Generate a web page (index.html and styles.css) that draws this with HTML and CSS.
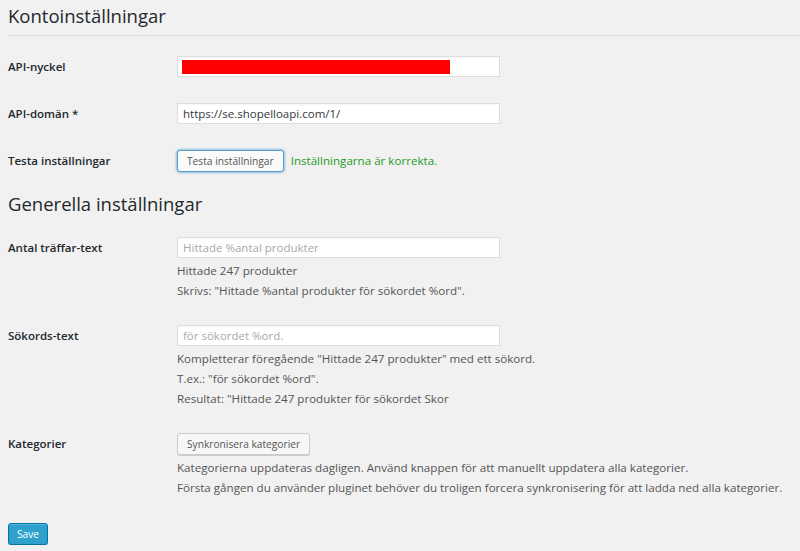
FILE: index.html
```html
<!DOCTYPE html>
<html lang="sv">
<head>
<meta charset="utf-8">
<title>Kontoinställningar</title>
<link rel="stylesheet" href="styles.css">
</head>
<body>
<div class="wrap">
  <h1 class="page-title">Kontoinställningar</h1>

  <div class="form-table">
    <div class="row">
      <div class="label">API-nyckel</div>
      <div class="field">
        <span class="redact-wrap">
          <input class="text-input" type="text" value="">
          <span class="redact"></span>
        </span>
      </div>
    </div>
    <div class="row">
      <div class="label">API-domän *</div>
      <div class="field">
        <input class="text-input" type="text" value="https://se.shopelloapi.com/1/">
      </div>
    </div>
    <div class="row">
      <div class="label">Testa inställningar</div>
      <div class="field inline">
        <button class="button focused" type="button">Testa inställningar</button>
        <span class="success">Inställningarna är korrekta.</span>
      </div>
    </div>
  </div>

  <h2 class="section-title">Generella inställningar</h2>

  <div class="form-table">
    <div class="row has-desc">
      <div class="label">Antal träffar-text</div>
      <div class="field">
        <input class="text-input" type="text" placeholder="Hittade %antal produkter">
        <div class="description">
          <div>Hittade 247 produkter</div>
          <div>Skrivs: "Hittade %antal produkter för sökordet %ord".</div>
        </div>
      </div>
    </div>
    <div class="row has-desc">
      <div class="label">Sökords-text</div>
      <div class="field">
        <input class="text-input" type="text" placeholder="för sökordet %ord.">
        <div class="description">
          <div>Kompletterar föregående "Hittade 247 produkter" med ett sökord.</div>
          <div>T.ex.: "för sökordet %ord".</div>
          <div>Resultat: "Hittade 247 produkter för sökordet Skor</div>
        </div>
      </div>
    </div>
    <div class="row has-desc">
      <div class="label">Kategorier</div>
      <div class="field">
        <button class="button" type="button">Synkronisera kategorier</button>
        <div class="description">
          <div>Kategorierna uppdateras dagligen. Använd knappen för att manuellt uppdatera alla kategorier.</div>
          <div>Första gången du använder pluginet behöver du troligen forcera synkronisering för att ladda ned alla kategorier.</div>
        </div>
      </div>
    </div>
  </div>

  <div class="submit">
    <button class="button-primary" type="button">Save</button>
  </div>
</div>
</body>
</html>
```

FILE: styles.css
```css
* { box-sizing: border-box; }

html, body {
  margin: 0;
  padding: 0;
  background: #f1f1f1;
}

body {
  font-family: "Open Sans", "Noto Sans", sans-serif;
  font-size: 11.6px;
  color: #444;
  overflow: hidden;
}

.wrap {
  margin-left: 8px;
}

.page-title {
  margin: 0;
  font-size: 18.5px;
  font-weight: 400;
  line-height: 29px;
  color: #23282d;
  padding: 1px 0 5px 0;
  border-bottom: 1px solid #dedede;
}

.form-table {
  margin-top: 7px;
}

.section-title {
  margin: 4px 0 6px 0;
  padding-top: 1px;
  font-size: 18.5px;
  font-weight: 400;
  line-height: 28px;
  color: #23282d;
}

.section-title + .form-table {
  margin-top: 0;
}

.row {
  display: grid;
  grid-template-columns: 169px 1fr;
  padding: 13px 0 13px 0;
}

.row.has-desc {
  padding-bottom: 11px;
}

.label {
  padding-top: 1px;
  font-weight: 600;
  font-size: 11.5px;
  line-height: 20px;
  color: #23282d;
}

.field.inline {
  display: flex;
  align-items: center;
  gap: 7px;
}

.text-input {
  display: block;
  width: 323px;
  height: 21px;
  margin: 0;
  padding: 0 5px;
  border: 1px solid #dddddd;
  background: #fff;
  font-family: "Open Sans", "Noto Sans", sans-serif;
  font-size: 11.5px;
  line-height: 19px;
  color: #32373c;
  box-shadow: inset 0 1px 2px rgba(0, 0, 0, 0.04);
  outline: none;
}

.text-input::placeholder {
  color: #a9a9a9;
}

.redact-wrap {
  position: relative;
  display: block;
  width: 323px;
}

.redact {
  position: absolute;
  left: 5px;
  top: 4px;
  width: 268px;
  height: 14px;
  background: #ff0000;
}

.button {
  display: inline-block;
  height: 22px;
  margin: 0;
  padding: 0 9px;
  font-family: "Open Sans", "Noto Sans", sans-serif;
  font-size: 10.2px;
  line-height: 20px;
  color: #555;
  background: #f7f7f7;
  border: 1px solid #cccccc;
  border-radius: 3px;
  box-shadow: 0 1px 0 #cccccc;
  white-space: nowrap;
  cursor: pointer;
}

.button.focused {
  border-color: #5b9dd9;
  background: #fafafa;
  box-shadow: 0 0 3px rgba(0, 115, 170, 0.8);
}

.success {
  color: #1f9a1f;
  font-size: 11.6px;
  line-height: 20px;
}

.description {
  margin-top: 3px;
  font-size: 11.6px;
  line-height: 20px;
  color: #555;
}

.submit {
  margin-top: 14px;
}

.button-primary {
  display: inline-block;
  height: 22px;
  margin: 0;
  padding: 0 8px;
  font-family: "Open Sans", "Noto Sans", sans-serif;
  font-size: 10.2px;
  line-height: 20px;
  color: #fff;
  background: #2ea2cc;
  border: 1px solid #0074a2;
  border-radius: 3px;
  box-shadow: inset 0 1px 0 rgba(120, 200, 230, 0.5), 0 1px 0 rgba(0, 0, 0, 0.15);
  cursor: pointer;
}
```
